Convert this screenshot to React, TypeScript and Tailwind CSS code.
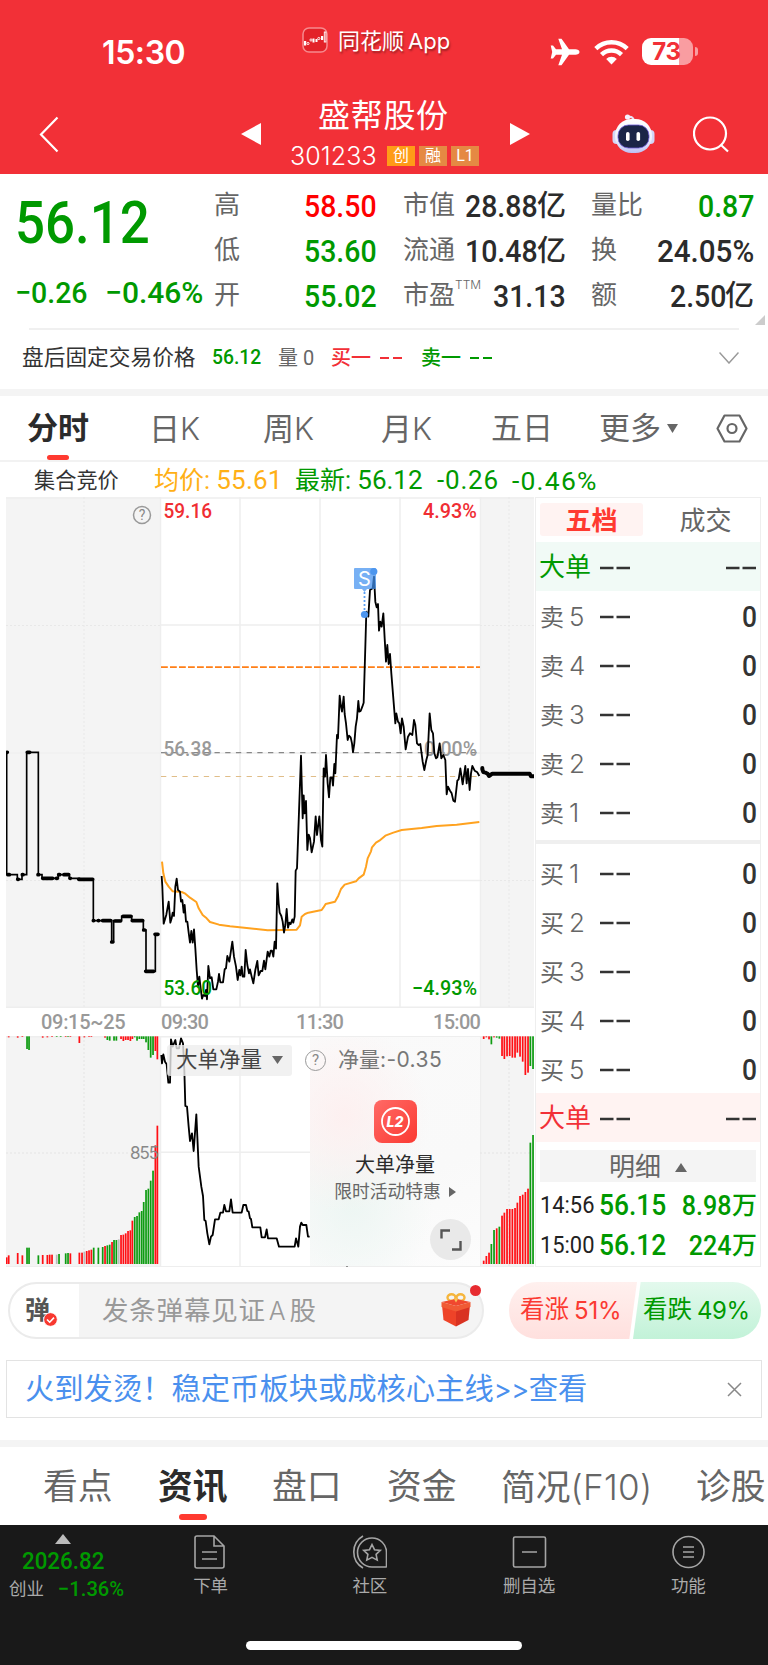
import React from 'react';
import clsx from 'clsx';

type Bar = [number, number, string];

const RED = '#ff0f14';
const GREEN = '#0f9c12';
const GRAY = '#bbbbbb';

const PRICE_LINE =
  '35,408 37,440 41,551 49,524 56,485 61,548 65,535 68,518 72,528 76,440 80,416 84,450 90,455 93,485 97,480 101,518 104,495 108,545 112,545 116,578 120,608 124,573 128,608 132,568 136,625 140,690 144,740 148,710 152,745 156,776 160,765 165,768 168,750 171,778 175,678 180,715 185,712 190,748 199,748 204,725 207,702 211,727 219,727 224,688 228,685 232,648 238,665 247,605 252,650 258,680 263,720 268,690 271,706 275,680 278,710 283,710 287,630 292,675 297,700 300,688 305,710 310,730 316,690 322,663 326,706 332,693 337,693 342,662 346,688 353,635 358,650 362,632 366,632 370,650 374,605 378,626 382,430 386,490 389,518 394,528 398,545 402,578 406,555 410,507 414,563 418,548 422,552 427,538 430,548 434,530 437,392 441,385 447,215 453,47 458,235 461,166 464,220 468,183 472,330 476,284 480,294 485,337 492,305 497,229 501,285 508,229 513,300 517,320 521,85 525,110 528,45 533,130 537,172 541,112 546,112 549,137 553,72 556,100 561,-15 564,-5 569,-133 573,-100 576,-85 581,-130 584,-78 588,-50 593,0 597,-13 602,-8 606,10 609,37 613,10 617,-40 621,-65 625,-117 628,-85 632,-87 637,-100 641,-112 646,-280 649,-385 655,-370 660,-450 668,-455 672,-490 676,-415 680,-398 684,-408 687,-328 691,-355 695,-340 700,-380 704,-305 708,-235 712,-285 716,-228 720,-258 724,-200 730,-125 736,-50 739,-80 744,-55 748,-50 752,-20 756,-65 761,-40 767,28 774,-10 780,-20 787,-15 792,-60 796,-45 801,10 806,15 811,12 818,65 823,90 829,60 833,45 839,-80 844,-30 849,-20 853,40 858,55 862,52 869,10 874,55 880,45 886,60 890,163 894,140 900,152 905,160 910,182 915,185 922,122 926,118 931,85 938,133 946,78 950,130 954,87 959,150 963,100 967,78 974,92 982,97 988,108';

const AVG_LINE =
  '36,365 40,400 46,425 56,440 68,454 95,456 106,461 120,473 139,486 146,505 158,525 170,535 180,546 207,554 240,559 290,564 353,571 440,569 450,556 455,530 465,522 475,518 515,510 520,503 527,492 555,485 565,467 573,447 584,434 618,424 626,415 641,404 648,380 653,355 663,334 666,322 678,308 688,302 706,287 730,278 755,270 815,264 860,258 920,254 988,246';

const NET_LINE =
  '484,105 486,130 490,103 495,125 500,133 505,188 510,188 513,58 518,80 526,60 530,85 537,85 543,55 549,70 553,150 556,258 561,260 566,320 570,363 576,340 581,393 589,283 596,440 604,500 609,528 613,600 617,603 622,640 628,673 633,650 638,645 645,598 656,598 661,578 669,578 673,555 678,574 688,574 693,538 698,578 725,578 730,555 738,555 742,573 746,575 750,595 753,597 757,622 781,622 785,652 795,652 800,628 804,655 830,655 837,680 884,680 888,655 895,680 900,620 904,608 908,615 919,615 924,650 929,650';

const parseBars = (s: string): Bar[] =>
  s.split(' ').map((b) => {
    const [x, y, c] = b.split(',');
    return [Number(x), Number(y), c === 'r' ? RED : c === 'g' ? GREEN : GRAY];
  });

const PRE_BOTTOM = parseBars(
  '20,712,r 26,706,r 53,699,r 67,706,r 81,683,g 87,683,g 115,706,g 128,705,r 142,705,r 149,704,r 156,704,r 170,704,x 177,702,g 197,700,g 204,699,g 211,700,r 238,698,r 246,698,r 253,695,x 260,693,r 267,691,r 274,689,r 281,683,g 295,683,g 308,681,g 315,678,r 322,676,g 329,674,g 336,666,r 342,660,g 349,660,g 356,658,x 363,645,r 370,644,r 377,640,r 384,633,r 391,631,r 397,602,r 404,591,g 411,588,g 418,577,g 425,573,g 431,546,g 438,510,g 445,506,g 452,482,g 459,452,g 466,376,r 472,317,r'
);
const PRE_TOP = parseBars(
  '26,52,r 53,53,r 67,51,r 81,87,g 87,90,g 128,53,r 142,52,r 156,51,r 170,51,g 182,51,g 197,51,r 204,51,g 211,51,r 238,69,r 253,52,r 267,51,r 274,51,r 315,53,r 322,60,g 329,62,g 342,62,g 349,62,g 363,57,r 370,63,r 377,60,r 384,60,r 391,63,r 397,57,r 404,52,g 411,62,g 418,57,g 425,57,g 431,57,g 438,67,g 445,90,g 452,113,g 459,105,g 466,93,r 472,118,r'
);
const POST_BOTTOM = parseBars(
  '551,722,r 559,708,r 567,698,r 574,672,g 582,630,g 590,625,r 598,620,g 606,587,r 613,578,r 621,567,r 629,567,r 637,567,r 645,564,r 652,548,r 660,528,r 668,524,r 676,516,r 684,506,r 691,368,g 699,345,g'
);
const POST_TOP = parseBars(
  '551,57,r 559,52,r 567,58,r 574,73,g 582,52,r 590,53,g 598,56,g 606,108,r 613,117,r 621,109,r 629,108,r 637,113,r 645,113,r 652,98,r 660,110,r 668,125,r 676,165,r 684,158,r 691,138,g 699,147,g'
);

const Bars: React.FC<{ top: Bar[]; bottom: Bar[] }> = ({ top, bottom }) => (
  <>
    {top.map(([x, y, c]) => (
      <rect key={`t${x}`} x={x - 2.5} y={49} width={5.2} height={y - 49} fill={c} />
    ))}
    {bottom.map(([x, y, c]) => (
      <rect key={`b${x}`} x={x - 2.5} y={y} width={5.2} height={732 - y} fill={c} />
    ))}
  </>
);

// Digits are squeezed a little to get the narrow look of the quote face
const Num: React.FC<{ className?: string; children: React.ReactNode }> = ({ className, children }) => (
  <span className={clsx('inline-block whitespace-nowrap font-medium', className)}>{children}</span>
);

const Latin: React.FC<{ className?: string; children: React.ReactNode }> = ({ className, children }) => (
  <span className={clsx("whitespace-nowrap font-['Inter',sans-serif]", className)}>{children}</span>
);

const Header: React.FC = () => (
  <header className="h-[174px] bg-[#f23037] text-white">
    <div className="flex h-[92px] pl-[102px]">
      <div className="w-[200px] pt-[33px] font-['Inter',sans-serif] text-[32px] font-semibold leading-10 tracking-[-0.4px]">15:30</div>
      <div className="flex w-[248px] gap-[10px] pt-[27px]">
        <svg width="26" height="26" viewBox="0 0 26 26">
          <rect x="1" y="1" width="24" height="24" rx="6" fill="#e32229" stroke="#f68a8e" strokeWidth="1.5" />
          <g fill="#fff">
            <rect x="2" y="14" width="2.2" height="4.5" />
            <rect x="10.5" y="11.5" width="2" height="4" />
            <rect x="13.5" y="12" width="2" height="3" />
            <rect x="19" y="9" width="2.2" height="4" />
          </g>
          <g fill="none" stroke="#fff" strokeWidth="0.9">
            <circle cx="6" cy="16.5" r="1.1" />
            <circle cx="9" cy="13" r="1.1" />
            <circle cx="16.8" cy="11.5" r="1.1" />
            <rect x="22.3" y="5" width="1.6" height="10" />
          </g>
        </svg>
        <div className="text-[22px] leading-[28px] [text-shadow:1px_2px_2px_rgba(0,0,0,0.35)]">
          同花顺<Latin className="ml-[4px]">App</Latin>
        </div>
      </div>
      <div className="mt-[38px] flex h-[27px] items-center">
        <svg width="30" height="28" viewBox="0 0 30 28" fill="#fff">
          <path d="M29.5 14c0 1.7-2 2.7-4 2.7h-6.5L11.5 27.2H8.3L12 16.7H6L3 20.6H.7L2.2 14 .7 7.4H3L6 11.3h6L8.3.8h3.2L19 11.3h6.5c2 0 4 1 4 2.7z" />
        </svg>
        <svg className="ml-[14px]" width="35" height="26" viewBox="0 0 35 26" fill="none" stroke="#fff" strokeWidth="4.4">
          <path d="M1.8 9.6a22.5 22.5 0 0 1 31.4 0" />
          <path d="M7.5 15.6a14.3 14.3 0 0 1 20 0" />
          <path d="M17.5 25.5l-5.3-5.6a7.7 7.7 0 0 1 10.6 0z" fill="#fff" stroke="none" />
        </svg>
        <div className="ml-[13px] flex h-[27px] w-[51px] items-center justify-center rounded-[9px] bg-[linear-gradient(90deg,#fff_0_37px,#f99da1_37px)] pr-[2px] font-['Inter',sans-serif] text-[24px] font-bold leading-none tracking-[-0.3px] text-[#f23037]">
          73
        </div>
        <div className="ml-[2px] h-[9px] w-[3px] rounded-r-full bg-[#f99da1]" />
      </div>
    </div>

    <div className="flex h-[82px] pl-[39px]">
      <svg className="mt-[24px]" width="20" height="37" viewBox="0 0 20 37" fill="none" stroke="#fff" strokeWidth="2.2">
        <path d="M18.5 1.5L2 18.5l16.5 17" />
      </svg>
      <svg className="mt-[31px] ml-[182px]" width="20" height="22" viewBox="0 0 20 22" fill="#fff">
        <path d="M20 0v22L0 11z" />
      </svg>
      <div className="w-[249px] shrink-0 pl-[29px]">
        <div className="pl-[28px] pt-[5px] text-[32px] leading-[38px] tracking-[0.7px]">盛帮股份</div>
        <div className="flex items-center gap-[4px] pt-[11px]">
          <Latin className="w-[93px] text-[25px] font-light leading-5 tracking-[0.1px]">301233</Latin>
          <span className="h-[20px] w-[28px] bg-[#ff9b17] text-center text-[16px] leading-[20px]">创</span>
          <span className="h-[20px] w-[28px] bg-[#e58943] text-center text-[16px] leading-[20px]">融</span>
          <span className="h-[20px] w-[28px] bg-[#e58943] text-center text-[16px] leading-[20px]">L1</span>
        </div>
      </div>
      <svg className="mt-[31px]" width="20" height="22" viewBox="0 0 20 22" fill="#fff">
        <path d="M0 0v22l20-11z" />
      </svg>
      <svg className="mt-[21px] ml-[82px]" width="43" height="42" viewBox="0 0 43 42">
        <defs>
          <linearGradient id="head" x1="0" y1="0" x2="0" y2="1">
            <stop offset="0" stopColor="#fff" />
            <stop offset="0.6" stopColor="#eef0fb" />
            <stop offset="1" stopColor="#bcc0f4" />
          </linearGradient>
        </defs>
        <path d="M16 4q6-1 6 5" fill="none" stroke="#e8e4f6" strokeWidth="2.2" />
        <circle cx="15.5" cy="4" r="2.6" fill="#f4f2ff" />
        <rect x="0.5" y="17" width="9" height="14" rx="4" fill="#d3d6f6" />
        <rect x="33.5" y="17" width="9" height="14" rx="4" fill="#d3d6f6" />
        <rect x="3" y="6" width="37" height="34" rx="16.5" fill="url(#head)" />
        <rect x="6" y="12" width="31" height="23" rx="10.5" fill="#1b2547" stroke="#6c59d6" strokeWidth="0.8" />
        <rect x="14" y="19" width="3.6" height="9" rx="1.8" fill="#fff" />
        <rect x="24.5" y="19" width="3.6" height="9" rx="1.8" fill="#fff" />
      </svg>
      <svg className="mt-[24px] ml-[38px]" width="37" height="37" viewBox="0 0 37 37" fill="none" stroke="#fff" strokeWidth="2.2">
        <circle cx="17" cy="17.5" r="16" />
        <path d="M28 29l7 6.5" />
      </svg>
    </div>
  </header>
);

const Row: React.FC<{ label: string; sup?: string; value: string; unit?: string; tone?: string }> = ({ label, sup, value, unit, tone = 'text-[#2b2b2b]' }) => (
  <div className="flex h-[45px] items-center justify-between">
    <span className="flex text-[26px] text-[#666]">
      {label}
      {sup && <sup className="mt-[9px] font-['Inter',sans-serif] text-[12px] font-light leading-3">{sup}</sup>}
    </span>
    <span className={clsx('flex items-center', tone)}>
      <Num className={clsx('origin-right text-[32px] leading-[42px]', value.endsWith('%') ? 'scale-x-[0.925]' : 'scale-x-[0.89]')}>{value}</Num>
      {unit && <span className="-ml-px text-[29px] font-medium leading-[42px]">{unit}</span>}
    </span>
  </div>
);

const Quote: React.FC = () => (
  <section className="h-[215px] bg-white">
    <div className="flex h-[154px] pt-[9px]">
      <div className="w-[214px] shrink-0 pl-[15px] text-[#009900]">
        <div className="h-[78px]">
          <Num className="origin-left scale-x-[0.88] text-[60px] leading-[80px]">56.12</Num>
        </div>
        <div className="flex h-[62px] items-center">
          <Num className="w-[90px] origin-left scale-x-[0.95] text-[30px]">−0.26</Num>
          <Num className="w-[100px] origin-left text-[30px]">−0.46%</Num>
        </div>
      </div>
      <div className="w-[163px]">
        <Row label="高" value="58.50" tone="text-[#ff0000]" />
        <Row label="低" value="53.60" tone="text-[#009900]" />
        <Row label="开" value="55.02" tone="text-[#009900]" />
      </div>
      <div className="ml-[26px] w-[163px]">
        <Row label="市值" value="28.88" unit="亿" />
        <Row label="流通" value="10.48" unit="亿" />
        <Row label="市盈" sup="TTM" value="31.13" />
      </div>
      <div className="ml-[25px] w-[163px]">
        <Row label="量比" value="0.87" tone="text-[#009900]" />
        <Row label="换" value="24.05%" />
        <Row label="额" value="2.50" unit="亿" />
      </div>
      <svg className="ml-[1px] mt-[132px]" width="10" height="10" viewBox="0 0 10 10">
        <path d="M10 0v10H0z" fill="#ccc" />
      </svg>
    </div>
    <div className="mx-[29px] border-t-2 border-[#f0f0f0]" />
    <div className="flex h-[56px] items-center pl-[22px] text-[21.7px] text-[#333]">
      <span className="w-[190px]">盘后固定交易价格</span>
      <Num className="w-[66px] origin-left scale-x-[0.92] text-[21px] text-[#009900]">56.12</Num>
      <span className="w-[53px] text-[20px] text-[#666]">量 <Num className="font-normal">0</Num></span>
      <span className="w-[49px] text-[20px] font-medium text-[#f23037]">买一</span>
      <span className="flex w-[41px] gap-[4px]"><i className="h-[2px] w-[9px] bg-[#f23037]" /><i className="h-[2px] w-[9px] bg-[#f23037]" /></span>
      <span className="w-[49px] text-[20px] font-medium text-[#009900]">卖一</span>
      <span className="flex w-[249px] gap-[4px]"><i className="h-[2px] w-[9px] bg-[#009900]" /><i className="h-[2px] w-[9px] bg-[#009900]" /></span>
      <svg width="20" height="12" viewBox="0 0 20 12" fill="none" stroke="#999" strokeWidth="1.5">
        <path d="M.5.5L10 11 19.5.5" />
      </svg>
    </div>
  </section>
);

const PeriodTabs: React.FC = () => (
  <nav className="flex h-[73px] border-t-[7px] border-b-2 border-t-[#f4f4f4] border-b-[#f2f2f2] bg-white pl-[27px] text-[31px] leading-[66px] text-[#666]">
    <div className="flex w-[122px] flex-col text-[31px] font-bold text-[#2b2b2b]">
      <span className="h-[59px]">分时</span>
      <span className="ml-[20px] h-[5px] w-[22px] rounded-full bg-[#ff3a30]" />
    </div>
    <span className="w-[114px]">日<Latin className="font-light">K</Latin></span>
    <span className="w-[118px]">周<Latin className="font-light">K</Latin></span>
    <span className="w-[110px]">月<Latin className="font-light">K</Latin></span>
    <span className="w-[108px]">五日</span>
    <span className="w-[68px]">更多</span>
    <svg className="mt-[28px]" width="11" height="9" viewBox="0 0 11 9"><path d="M0 0h11L5.5 9z" fill="#666" /></svg>
    <svg className="mt-[18px] ml-[38px]" width="32" height="29" viewBox="0 0 32 29" fill="none" stroke="#666" strokeWidth="2.2">
      <path d="M8.5 1.5h15l7 13-7 13h-15l-7-13z" strokeLinejoin="round" />
      <circle cx="16" cy="14.5" r="4.5" />
    </svg>
  </nav>
);

const Legend: React.FC = () => (
  <div className="flex h-[35px] items-center bg-white pl-[34px] pt-px text-[25px] leading-[35px]">
    <span className="w-[120px] text-[21.2px] text-[#333]">集合竞价</span>
    <span className="w-[141px] whitespace-nowrap text-[#ffb016]">均价: <span className="text-[26px] tracking-[0.2px]">55.61</span></span>
    <span className="w-[142px] whitespace-nowrap text-[#009900]">最新: <span className="text-[26px]">56.12</span></span>
    <span className="w-[75px] text-[26px] tracking-[0.8px] text-[#009900]">-0.26</span>
    <span className="text-[26.5px] tracking-[1.2px] text-[#009900]">-0.46%</span>
  </div>
);

const PriceChart: React.FC = () => (
  <svg width="528" height="511" viewBox="6 497 528 511" className="block font-['Roboto',sans-serif]">
    <rect x="6" y="497" width="154" height="511" fill="#f4f4f4" />
    <rect x="480" y="497" width="54" height="511" fill="#f4f4f4" />
    <g stroke="#eeeeee" strokeWidth="1.5" fill="none">
      <path d="M6 498H534M6 1007.3H534M160.5 497V1008M480.5 497V1008M240 497V1008M320 497V1008M400 497V1008M160 625H480M160 753H480M160 880.5H480" />
      <path d="M84 497V1008M509 497V1008M6 625.5H160M480 625.5H534M6 880.5H160M480 880.5H534" strokeDasharray="2 2" strokeWidth="1" stroke="#e8e8e8" />
      <path d="M6 753H160M480 753H534" strokeWidth="1" />
    </g>
    <path d="M161 667.2H480" stroke="#ff7f17" strokeWidth="1.8" strokeDasharray="6.8 2.2" />
    <path d="M161 752.6H480" stroke="#888" strokeWidth="1.2" strokeDasharray="5.3 5.4" />
    <path d="M161 776.5H480" stroke="#e0bd88" strokeWidth="1.2" strokeDasharray="5.3 5.4" />
    <g fill="#999" fontSize="20.5" fontWeight="500">
      <text x="163.5" y="756" textLength="48.5" lengthAdjust="spacingAndGlyphs">56.38</text>
      <text x="424" y="756" textLength="53" lengthAdjust="spacingAndGlyphs">0.00%</text>
    </g>
    <g fill="none" stroke="#000" transform="translate(0 490) scale(.33333)">
      <path strokeWidth="5" d="M20 787V1154H52V1168H66V1154H80V787H115V1154H126V1165H175V1154H208V1165H238V1168H280V1292H335V1356H341V1292H365V1279H395V1292H430V1320H438V1444H466V1333H474" />
      <path
        strokeWidth="11"
        strokeLinecap="round"
        d="M21 787h1M24 1154h4M53 1168h2M67 1154h2M82 787h7M114 1154h2M128 1165h30M169 1165h3M176 1154h3M192 1154h14M210 1165h1M236 1168h42M280 1292h1M295 1292h1M308 1292h24M335 1356h3M345 1293h16M369 1279h24M397 1292h31M431 1320h3M437 1444h24M465 1333h9"
      />
    </g>
    <g fill="none" transform="translate(150 740) scale(.33333)">
      <polyline points={AVG_LINE} stroke="#ffa21f" strokeWidth="6" strokeLinejoin="round" />
      <polyline points={PRICE_LINE} stroke="#000" strokeWidth="5.5" strokeLinejoin="round" />
      <path d="M997 84v4l3 8 7 2 6 3 4 7 10-7h112l4 8h12" stroke="#000" strokeWidth="12" strokeLinecap="round" strokeLinejoin="round" />
    </g>
    <g fontSize="20.5" fontWeight="500">
      <text x="163.5" y="518" fill="#f02d33" textLength="48.5" lengthAdjust="spacingAndGlyphs">59.16</text>
      <text x="423" y="518" fill="#f02d33" textLength="54" lengthAdjust="spacingAndGlyphs">4.93%</text>
      <text x="163.5" y="995" fill="#009900" textLength="48.5" lengthAdjust="spacingAndGlyphs">53.60</text>
      <text x="412" y="995" fill="#009900" textLength="65" lengthAdjust="spacingAndGlyphs">−4.93%</text>
    </g>
    <circle cx="142" cy="515" r="8.5" stroke="#999" fill="none" strokeWidth="1.5" />
    <text x="142" y="520" fill="#888" fontSize="14" textAnchor="middle">?</text>
    {/* sell marker */}
    <path d="M355 568h20a1 1 0 0 1 1 1v19a1 1 0 0 1-1 1h-8l-2.5 3-2.5-3h-7a1 1 0 0 1-1-1v-19a1 1 0 0 1 1-1z" fill="#4391f0" fillOpacity=".72" />
    <text x="364.3" y="586" fill="#fff" fontSize="20" textAnchor="middle" className="font-['Inter',sans-serif]">S</text>
    <path d="M364.5 592V612" stroke="#5b9ff2" strokeWidth="1.8" strokeDasharray="2 2" />
    <circle cx="364.5" cy="614.5" r="3.6" fill="#4d96ee" />
    <circle cx="373.8" cy="571.5" r="3.6" fill="#4d96ee" />
  </svg>
);

const TimeAxis: React.FC = () => (
  <div className="flex h-[28px] items-center text-[20px] font-medium leading-[28px] text-[#999]">
    <span className="w-[155px] pl-[35px] tracking-[-0.3px]">09:15~25</span>
    <span className="w-[135px] tracking-[-0.7px]">09:30</span>
    <span className="w-[137px] tracking-[-0.7px]">11:30</span>
    <span className="tracking-[-0.7px]">15:00</span>
  </div>
);

const NetVolume: React.FC = () => (
  <div className="relative h-[231px]">
    <svg width="528" height="231" viewBox="6 1036 528 231" className="block font-['Roboto',sans-serif]">
      <rect x="6" y="1036" width="154" height="231" fill="#f4f4f4" />
      <rect x="480" y="1036" width="54" height="231" fill="#f4f4f4" />
      <g stroke="#eeeeee" strokeWidth="1.5" fill="none">
        <path d="M6 1036.7H534M6 1266.7H534M160.5 1036V1267M480.5 1036V1267M240 1036V1267M160 1152.3H480" />
        <path d="M84 1036V1267M509 1036V1267M6 1153H160M480 1153H534" strokeDasharray="2 2" strokeWidth="1" stroke="#e4e4e4" />
      </g>
      <g transform="translate(0 1020) scale(.33333)">
        <Bars top={PRE_TOP} bottom={PRE_BOTTOM} />
        <polyline points={NET_LINE} fill="none" stroke="#000" strokeWidth="5.5" strokeLinejoin="round" />
      </g>
      <g transform="translate(300 1020) scale(.33333)">
        <Bars top={POST_TOP} bottom={POST_BOTTOM} />
      </g>
      <text x="130" y="1159" fill="#888" fontSize="17" textLength="29" className="font-['Inter',sans-serif]">855</text>
      <path d="M346 1266h2" stroke="#333" />
    </svg>

    {/* promo card covering the locked part of the indicator */}
    <div className="absolute top-px left-[304px] flex h-[229px] w-[170px] flex-col items-center bg-[radial-gradient(ellipse_at_20%_35%,#fdf0f0_0,transparent_45%),radial-gradient(ellipse_at_25%_72%,#edf6f3_0,transparent_45%),linear-gradient(160deg,#fafafa,#f9f9f9_60%,#fcfcfc)] pt-[63px]">
      <svg width="43" height="43" viewBox="0 0 43 43">
        <defs>
          <linearGradient id="l2" x1="0" y1="0" x2="1" y2="1">
            <stop offset="0" stopColor="#ff6a66" />
            <stop offset="1" stopColor="#fb3a32" />
          </linearGradient>
        </defs>
        <rect width="43" height="43" rx="8" fill="url(#l2)" />
        <circle cx="21.5" cy="21.5" r="13.5" fill="none" stroke="#fff" strokeWidth="1.8" />
        <text x="21" y="26.5" fill="#fff" fontSize="14" fontWeight="800" fontStyle="italic" textAnchor="middle" className="font-['Inter',sans-serif]">L2</text>
      </svg>
      <div className="mt-[7px] text-[20px] leading-[30px] text-[#2b2b2b]">大单净量</div>
      <div className="flex items-center gap-[8px] whitespace-nowrap text-[17.8px] leading-[24px] text-[#666]">
        限时活动特惠
        <svg width="7" height="10" viewBox="0 0 7 10"><path d="M0 0l7 5-7 5z" fill="#666" /></svg>
      </div>
    </div>
    <div className="absolute top-[8px] left-[161px] flex items-center">
      <div className="flex h-[31px] w-[125px] items-center gap-[10px] rounded-[3px] bg-[#eeeeee]/80 pl-[9px] text-[21.5px] text-[#444]">
        大单净量
        <svg width="11" height="8" viewBox="0 0 11 8"><path d="M0 0h11L5.5 8z" fill="#666" /></svg>
      </div>
      <div className="ml-[13px] flex h-[21px] w-[21px] items-center justify-center rounded-full border-[1.5px] border-[#999] text-[15px] leading-none text-[#888]">?</div>
      <div className="ml-[12px] text-[21px] leading-[31px] text-[#777]">
        净量<Latin className="text-[21px] tracking-[0.4px]">:-0.35</Latin>
      </div>
    </div>
    <div className="absolute top-[183px] left-[424px] flex h-[41px] w-[41px] items-center justify-center rounded-full bg-[#e9e9e9]">
      <svg width="22" height="22" viewBox="0 0 22 22" fill="none" stroke="#555" strokeWidth="2.4">
        <path d="M1.5 9.5v-8h8.5M12 20.5h8.5v-8.5" />
      </svg>
    </div>
  </div>
);

const Dashes: React.FC = () => (
  <svg width="30" height="4" viewBox="0 0 30 4" stroke="#333" strokeWidth="2.5">
    <path d="M0 2h13.5M16.5 2H30" />
  </svg>
);

const Level: React.FC<{ side: string; n: number }> = ({ side, n }) => (
  <div className="flex h-[49px] shrink-0 items-center pt-[3px] pl-[4px] pr-[3px]">
    <span className="w-[60px] whitespace-nowrap text-[24px] leading-[44px] text-[#666]">
      {side}<Latin className="ml-[5px] text-[26px] font-light">{n}</Latin>
    </span>
    <Dashes />
    <Num className="ml-auto origin-right scale-x-[0.88] text-[30px] leading-[44px] text-[#333]">0</Num>
  </div>
);

const BigOrder: React.FC<{ className: string }> = ({ className }) => (
  <div className={clsx('flex h-[49px] shrink-0 items-center pl-[3px] pr-[4px] pt-[2px]', className)}>
    <span className="w-[61px] text-[26px]">大单</span>
    <Dashes />
    <span className="ml-auto"><Dashes /></span>
  </div>
);

const Trade: React.FC<{ time: string; price: string; vol: string; unit: string }> = ({ time, price, vol, unit }) => (
  <div className="flex h-[40px] shrink-0 items-center justify-between pl-[4px] pr-[3px] pt-[2px]">
    <span className="flex items-center">
      <Num className="w-[59px] origin-left scale-x-[0.95] text-[23px] font-normal text-[#222]">{time}</Num>
      <Num className="origin-left scale-x-[0.91] text-[29px] text-[#009900]">{price}</Num>
    </span>
    <span className="flex items-center text-[#009900]">
      <Num className="origin-right scale-x-[0.88] text-[28.5px]">{vol}</Num>
      <span className="text-[25px] font-medium">{unit}</span>
    </span>
  </div>
);

const OrderBook: React.FC = () => (
  <aside className="flex h-[770px] w-[226px] flex-col border border-[#eeeeee] bg-white">
    <div className="flex h-[44px] shrink-0 gap-[9px] pl-[4px] pt-[5px] text-[26px] leading-[36px]">
      <div className="h-[33px] w-[103px] rounded-[3px] bg-[#fff3f2] text-center font-bold text-[#ff3a30]">五档</div>
      <div className="w-[107px] text-center text-[#666]">成交</div>
    </div>
    <BigOrder className="bg-[#f1faf6] text-[#009900]" />
    {[5, 4, 3, 2, 1].map((n) => <Level key={n} side="卖" n={n} />)}
    <div className="mt-[4px] mb-[4px] h-[4px] shrink-0 bg-[#efefef]" />
    {[1, 2, 3, 4, 5].map((n) => <Level key={n} side="买" n={n} />)}
    <BigOrder className="bg-[#fff3f2] text-[#f23037]" />
    <div className="mx-[4px] mt-[8px] mb-[3px] flex h-[32px] shrink-0 items-center justify-center gap-[14px] bg-[#f4f4f4] pt-[2px] text-[26px] text-[#666]">
      明细
      <svg width="12" height="9" viewBox="0 0 12 9"><path d="M0 9h12L6 0z" fill="#666" /></svg>
    </div>
    <Trade time="14:56" price="56.15" vol="8.98" unit="万" />
    <Trade time="15:00" price="56.12" vol="224" unit="万" />
  </aside>
);

const Danmu: React.FC = () => (
  <div className="flex h-[93px] bg-white pt-[15px] pl-[8px]">
    <div className="relative flex h-[57px] w-[476px] items-center overflow-visible rounded-full border-2 border-[#ebebeb] bg-[linear-gradient(90deg,#fff_0_69px,#f4f4f4_69px)]">
      <div className="relative w-[92px] pl-[15px] text-[25px] font-bold leading-[34px] text-[#555]">
        弹
        <svg className="absolute top-[18px] left-[33px]" width="15" height="15" viewBox="0 0 15 15">
          <circle cx="7.5" cy="7.5" r="6.8" fill="#f8382f" stroke="#fff" strokeWidth=".8" />
          <path d="M4 7.5l2.7 2.7 4.3-4.6" fill="none" stroke="#fff" strokeWidth="1.6" />
        </svg>
      </div>
      <span className="text-[26.5px] tracking-[0.8px] text-[#999]">发条弹幕见证<Latin className="mx-[3px] text-[25px] font-light">A</Latin>股</span>
      <svg className="ml-auto mr-[11px] -mt-px" width="30" height="34" viewBox="0 0 30 34">
        <g fill="none" stroke="#f5b53c" strokeWidth="2.4">
          <ellipse cx="10.5" cy="4.5" rx="4" ry="3.2" />
          <ellipse cx="19.5" cy="4.5" rx="4" ry="3.2" />
        </g>
        <path d="M.5 9L15 6 29.5 9 15 13z" fill="#f0482f" />
        <path d="M1 12l14 5v16.5L2.5 27z" fill="#ee4328" />
        <path d="M29 12l-14 5v16.5L27.5 27z" fill="#d93222" />
        <path d="M.5 9L15 13v5.5L.5 14zM29.5 9L15 13v5.5L29.5 14z" fill="#f05a35" />
        <path d="M13.2 6.5l1.8 3 1.8-3-1.8-1.500z" fill="#f9c45a" />
      </svg>
      <span className="absolute top-[1px] right-[1px] h-[11px] w-[11px] rounded-full bg-[#e72b30]" />
    </div>
    <div className="ml-[25px] flex h-[57px]">
      <div className="flex h-[57px] w-[128px] items-center bg-[linear-gradient(180deg,#fff0ee,#ffe0de)] pl-[11px] text-[24.5px] text-[#fb3a32] [border-radius:28px_0_0_28px] [clip-path:polygon(0_0,100%_0,94%_100%,0_100%)]">
        看涨<Latin className="ml-[5px] text-[24px] tracking-[-0.2px]">51%</Latin>
      </div>
      <div className="-ml-[4px] flex h-[57px] w-[128px] items-center bg-[linear-gradient(180deg,#e3f9ed,#c2f2d8)] pl-[10px] text-[24.5px] text-[#009900] [border-radius:0_28px_28px_0] [clip-path:polygon(6%_0,100%_0,100%_100%,0_100%)]">
        看跌<Latin className="ml-[5px] text-[24px] tracking-[-0.4px]">49%</Latin>
      </div>
    </div>
  </div>
);

const Notice: React.FC = () => (
  <div className="flex h-[80px] bg-white px-[6px]">
    <div className="flex h-[58px] w-full items-center justify-between border-[1.5px] border-[#e3e3e3] pl-[18px] pr-[19px]">
      <span className="whitespace-nowrap pt-[1px] text-[29.3px] leading-[42px] text-[#4a90ee]">火到发烫！稳定币板块或成核心主线<Latin className="text-[27px] tracking-[-0.4px]">&gt;&gt;</Latin>查看</span>
      <svg width="15" height="15" viewBox="0 0 15 15" stroke="#888" strokeWidth="1.5"><path d="M1 1l13 13M14 1L1 14" /></svg>
    </div>
  </div>
);

const InfoTabs: React.FC = () => (
  <nav className="flex h-[85px] overflow-hidden whitespace-nowrap border-t-[7px] border-[#f4f4f4] bg-white pl-[43px] text-[34.8px] leading-[81px] text-[#666]">
    <span className="w-[115px] shrink-0">看点</span>
    <div className="flex w-[114px] shrink-0 flex-col font-bold text-[#2b2b2b]">
      <span className="h-[67px]">资讯</span>
      <span className="ml-[21px] h-[6px] w-[28px] rounded-full bg-[#ff3a30]" />
    </div>
    <span className="w-[115px] shrink-0">盘口</span>
    <span className="w-[114px] shrink-0">资金</span>
    <span className="w-[195px] shrink-0">简况<Latin className="text-[35px] font-light tracking-[0.3px]">(F10)</Latin></span>
    <span className="shrink-0">诊股</span>
  </nav>
);

const items = [
  {
    label: '下单',
    icon: <path d="M21 1H4a2 2 0 0 0-2 2v28a2 2 0 0 0 2 2h25a2 2 0 0 0 2-2V11zM21 1v10h10M9 17h15M9 24h15" />,
  },
  {
    label: '社区',
    icon: (
      <>
        <path d="M34 32H20a14.5 14.5 0 1 1 14.5-14.5V31a1 1 0 0 1-1 1zM11 1a18.5 18.5 0 0 0 0 32" />
        <path d="M20 9.500l2.500 5.200 5.800.7-4.200 4 1.100 5.700-5.200-2.800-5.200 2.800 1.100-5.700-4.200-4 5.800-.7z" />
      </>
    ),
  },
  {
    label: '删自选',
    icon: <path d="M3 2h29a1.500 1.500 0 0 1 1.500 1.500v27A1.500 1.500 0 0 1 32 32H3a1.500 1.500 0 0 1-1.500-1.500v-27A1.500 1.500 0 0 1 3 2zM10 17h15" />,
  },
  {
    label: '功能',
    icon: (
      <>
        <circle cx="17.5" cy="17" r="15.5" />
        <path d="M12 12h11M12 17h11M12 22h11" />
      </>
    ),
  },
];

const BottomBar: React.FC = () => (
  <footer className="flex h-[140px] flex-col bg-[#191919]">
    <div className="flex h-[116px]">
      <div className="w-[131px] shrink-0 pt-[9px]">
        <svg className="ml-[55px]" width="16" height="10" viewBox="0 0 16 10"><path d="M8 0l8 10H0z" fill="#bbb" /></svg>
        <div className="h-[33px] pl-[22px] pt-[1px]">
          <Num className="origin-left scale-x-[0.93] text-[24px] leading-[33px] text-[#009900]">2026.82</Num>
        </div>
        <div className="flex pl-[9px] text-[17.5px] leading-[24px] text-[#aaa]">
          <span className="w-[49px]">创业</span>
          <Num className="origin-left scale-x-[0.96] text-[21px] text-[#009900]">−1.36%</Num>
        </div>
      </div>
      {items.map((it) => (
        <div key={it.label} className="flex w-[159.25px] shrink-0 flex-col items-center pt-[10px] text-[17.5px] leading-[22px] text-[#aaa]">
          <svg className="mb-[5px]" width="35" height="35" viewBox="0 0 35 35" fill="none" stroke="#a5a5a5" strokeWidth="1.6">
            {it.icon}
          </svg>
          {it.label}
        </div>
      ))}
    </div>
    <div className="ml-[246px] h-[9px] w-[276px] rounded-full bg-white" />
  </footer>
);

const App: React.FC = () => (
  <div className="h-[1665px] w-[768px] overflow-hidden bg-white font-['Roboto','Noto_Sans_CJK_SC',sans-serif]">
    <Header />
    <Quote />
    <PeriodTabs />
    <Legend />
    <div className="flex h-[770px] bg-white pl-[6px]">
      <div className="w-[529px]">
        <PriceChart />
        <TimeAxis />
        <NetVolume />
      </div>
      <OrderBook />
    </div>
    <Danmu />
    <Notice />
    <InfoTabs />
    <BottomBar />
  </div>
);

export default App;
